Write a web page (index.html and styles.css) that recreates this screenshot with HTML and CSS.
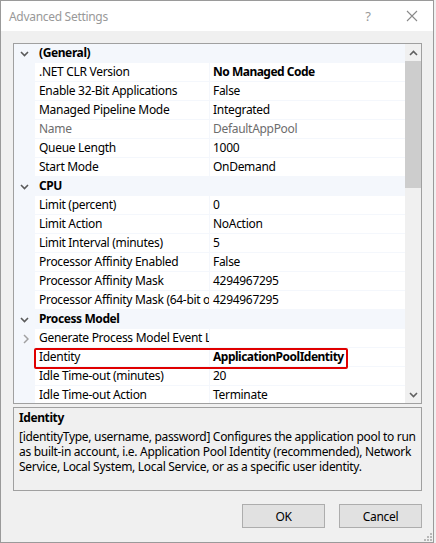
FILE: index.html
```html
<!DOCTYPE html>
<html>
<head>
<meta charset="utf-8">
<link rel="stylesheet" href="styles.css">
</head>
<body>
<div class="window">
  <div class="titlebar">
    <span class="title">Advanced Settings</span>
    <span class="help">?</span>
    <span class="close"><svg width="12" height="12" viewBox="0 0 12 12"><path d="M1 1L11 11M11 1L1 11" stroke="#8a8a8a" stroke-width="1.1" fill="none"/></svg></span>
  </div>
  <div class="content">
    <div class="grid">
      <div class="rows">
        <div class="cat"><span class="margin"><svg class="chev" width="9" height="6" viewBox="0 0 9 6"><path d="M1 1L4.5 4.5L8 1" stroke="#5a5a5a" stroke-width="1.6" fill="none"/></svg></span><span class="cat-name">(General)</span></div>
        <div class="prop"><span class="margin"></span><span class="name">.NET CLR Version</span><span class="value bold">No Managed Code</span></div>
        <div class="prop"><span class="margin"></span><span class="name">Enable 32-Bit Applications</span><span class="value">False</span></div>
        <div class="prop"><span class="margin"></span><span class="name">Managed Pipeline Mode</span><span class="value">Integrated</span></div>
        <div class="prop readonly"><span class="margin"></span><span class="name">Name</span><span class="value">DefaultAppPool</span></div>
        <div class="prop"><span class="margin"></span><span class="name">Queue Length</span><span class="value">1000</span></div>
        <div class="prop"><span class="margin"></span><span class="name">Start Mode</span><span class="value">OnDemand</span></div>
        <div class="cat"><span class="margin"><svg class="chev" width="9" height="6" viewBox="0 0 9 6"><path d="M1 1L4.5 4.5L8 1" stroke="#5a5a5a" stroke-width="1.6" fill="none"/></svg></span><span class="cat-name">CPU</span></div>
        <div class="prop"><span class="margin"></span><span class="name">Limit (percent)</span><span class="value">0</span></div>
        <div class="prop"><span class="margin"></span><span class="name">Limit Action</span><span class="value">NoAction</span></div>
        <div class="prop"><span class="margin"></span><span class="name">Limit Interval (minutes)</span><span class="value">5</span></div>
        <div class="prop"><span class="margin"></span><span class="name">Processor Affinity Enabled</span><span class="value">False</span></div>
        <div class="prop"><span class="margin"></span><span class="name">Processor Affinity Mask</span><span class="value">4294967295</span></div>
        <div class="prop"><span class="margin"></span><span class="name">Processor Affinity Mask (64-bit option)</span><span class="value">4294967295</span></div>
        <div class="cat"><span class="margin"><svg class="chev" width="9" height="6" viewBox="0 0 9 6"><path d="M1 1L4.5 4.5L8 1" stroke="#5a5a5a" stroke-width="1.6" fill="none"/></svg></span><span class="cat-name">Process Model</span></div>
        <div class="prop"><span class="margin"><svg class="chev-right" width="6" height="10" viewBox="0 0 6 10"><path d="M1 1L5 5L1 9" stroke="#a0a0a0" stroke-width="1.5" fill="none"/></svg></span><span class="name">Generate Process Model Event Log Entry</span><span class="value"></span></div>
        <div class="prop"><span class="margin"></span><span class="name">Identity</span><span class="value bold">ApplicationPoolIdentity</span></div>
        <div class="prop"><span class="margin"></span><span class="name">Idle Time-out (minutes)</span><span class="value">20</span></div>
        <div class="prop"><span class="margin"></span><span class="name">Idle Time-out Action</span><span class="value">Terminate</span></div>
        <div class="highlight"></div>
      </div>
      <div class="scrollbar">
        <div class="arrow"><svg width="9" height="6" viewBox="0 0 9 6"><path d="M1 5L4.5 1.5L8 5" stroke="#606060" stroke-width="1.6" fill="none"/></svg></div>
        <div class="track"><div class="thumb"></div></div>
        <div class="arrow"><svg width="9" height="6" viewBox="0 0 9 6"><path d="M1 1L4.5 4.5L8 1" stroke="#606060" stroke-width="1.6" fill="none"/></svg></div>
      </div>
    </div>
    <div class="desc">
      <div class="desc-title">Identity</div>
      <div class="desc-text">[identityType, username, password] Configures the application pool to run as built-in account, i.e. Application Pool Identity (recommended), Network Service, Local System, Local Service, or as a specific user identity.</div>
    </div>
    <div class="buttons">
      <button class="btn">OK</button>
      <button class="btn">Cancel</button>
    </div>
    <div class="grip"><svg width="8" height="8" viewBox="0 0 8 8" fill="#b8b8b8"><rect x="6" y="0" width="2" height="2"/><rect x="3" y="3" width="2" height="2"/><rect x="6" y="3" width="2" height="2"/><rect x="0" y="6" width="2" height="2"/><rect x="3" y="6" width="2" height="2"/><rect x="6" y="6" width="2" height="2"/></svg></div>
  </div>
</div>
</body>
</html>
```
FILE: styles.css
```css
* { box-sizing: border-box; }
html, body { margin: 0; padding: 0; background: #f0f0f0; }
body {
  font-family: "Noto Sans", "Open Sans", sans-serif;
  font-size: 12px;
  letter-spacing: -0.3px;
  color: #000;
}
.window {
  width: 434px;
  height: 543px;
  border: 1px solid #9a9a9a;
  background: #f0f0f0;
  display: flex;
  flex-direction: column;
}
.titlebar {
  height: 30px;
  background: #fff;
  display: flex;
  align-items: center;
  padding-left: 8px;
  flex: none;
}
.title {
  color: #999;
  font-size: 12px;
  flex: 1;
}
.help {
  color: #999;
  font-size: 13px;
  width: 46px;
  text-align: center;
}
.close {
  width: 42px;
  display: flex;
  justify-content: center;
  align-items: center;
}
.content {
  position: relative;
  flex: 1;
  padding: 12px 11px 0 12px;
  display: flex;
  flex-direction: column;
}
.grid {
  height: 361px;
  border: 1px solid #a0a0a0;
  display: flex;
  background: #fff;
  flex: none;
}
.rows {
  position: relative;
  width: 392px;
  overflow: hidden;
}
.cat, .prop {
  display: flex;
  height: 19px;
  line-height: 18px;
}
.cat {
  background: #f4f7fc;
}
.margin {
  width: 21px;
  flex: none;
  background: #f4f7fc;
  display: flex;
  align-items: center;
  justify-content: center;
}
.chev-right { margin-left: 3px; }
.cat-name {
  font-weight: bold;
  letter-spacing: -0.4px;
  padding-left: 4px;
}
.name {
  width: 175px;
  flex: none;
  padding-left: 4px;
  white-space: nowrap;
  overflow: hidden;
  border-bottom: 1px solid #f4f7fc;
  border-right: 1px solid #f4f7fc;
}
.value {
  flex: 1;
  padding-left: 3px;
  white-space: nowrap;
  overflow: hidden;
  border-bottom: 1px solid #f4f7fc;
}
.bold { font-weight: bold; letter-spacing: -0.5px; }
.readonly .name, .readonly .value { color: #6d6d6d; }
.highlight {
  position: absolute;
  left: 20px;
  top: 304px;
  width: 314px;
  height: 21px;
  border: 2px solid #e00000;
  border-radius: 2px;
}
.scrollbar {
  width: 16px;
  background: #f0f0f0;
  display: flex;
  flex-direction: column;
}
.arrow {
  height: 17px;
  display: flex;
  align-items: center;
  justify-content: center;
}
.track { flex: 1; }
.thumb {
  height: 127px;
  background: #cdcdcd;
}
.desc {
  margin-top: 3px;
  height: 84px;
  border: 1px solid #a0a0a0;
  padding: 2px 5px 0 5px;
}
.desc-title {
  font-weight: bold;
  letter-spacing: -0.4px;
  line-height: 16px;
}
.desc-text {
  margin-top: 3px;
  line-height: 15px;
}
.buttons {
  margin-top: 13px;
  display: flex;
  justify-content: flex-end;
  gap: 14px;
}
.btn {
  width: 83px;
  height: 24px;
  background: #e1e1e1;
  border: 1px solid #adadad;
  font-family: inherit;
  font-size: 12px;
  letter-spacing: -0.3px;
  color: #000;
  padding: 0;
}
.grip {
  position: absolute;
  right: 1px;
  bottom: 1px;
  line-height: 0;
}
```
